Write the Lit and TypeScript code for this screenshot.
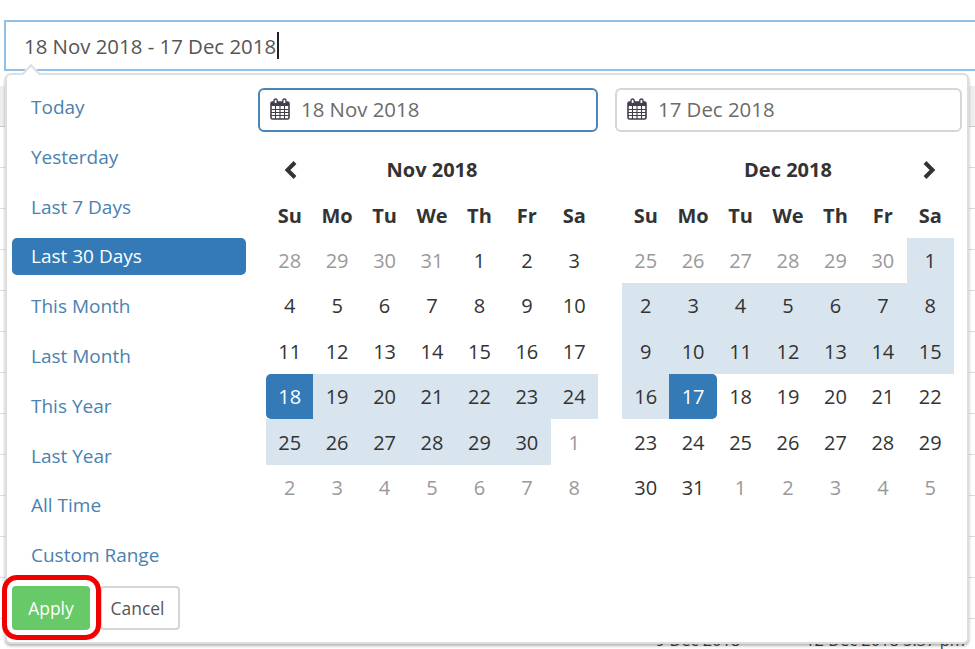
import { LitElement, html, css, nothing } from 'lit';
import { customElement } from 'lit/decorators.js';

const RANGES = ['Today', 'Yesterday', 'Last 7 Days', 'Last 30 Days', 'This Month', 'Last Month', 'This Year', 'Last Year', 'All Time', 'Custom Range'];
const DOW = ['Su', 'Mo', 'Tu', 'We', 'Th', 'Fr', 'Sa'];

type Cell = { d: number; off?: boolean; inRange?: boolean; active?: 'start' | 'end' };

const NOV: Cell[] = [
  ...[28, 29, 30, 31].map((d) => ({ d, off: true })),
  ...Array.from({ length: 30 }, (_, i) => {
    const d = i + 1;
    return { d, inRange: d >= 18, active: d === 18 ? ('start' as const) : undefined };
  }),
  ...[1, 2, 3, 4, 5, 6, 7, 8].map((d) => ({ d, off: true })),
];

const DEC: Cell[] = [
  ...[25, 26, 27, 28, 29, 30].map((d) => ({ d, off: true })),
  ...Array.from({ length: 31 }, (_, i) => {
    const d = i + 1;
    return { d, inRange: d <= 17, active: d === 17 ? ('end' as const) : undefined };
  }),
  ...[1, 2, 3, 4, 5].map((d) => ({ d, off: true })),
];

const calendarIcon = html`<svg class="cal-icon" viewBox="0 0 20 22" width="20" height="22">
  <rect x="1" y="4" width="18" height="17" rx="1.5" fill="#fff" stroke="#443d4c" stroke-width="1.6"/>
  <rect x="1" y="4" width="18" height="4" fill="#443d4c"/>
  <path d="M1 11.5H19M1 14.5H19M1 17.5H19M5.5 8V21M10 8V21M14.5 8V21" stroke="#443d4c" stroke-width="1.1" fill="none"/>
  <path d="M4 5V2.6A1.6 1.6 0 0 1 7.2 2.6V5M12.8 5V2.6A1.6 1.6 0 0 1 16 2.6V5" fill="#fff" stroke="#443d4c" stroke-width="1.4"/>
</svg>`;

@customElement('app-root')
export class AppRoot extends LitElement {
  static override styles = css`
    :host {
      display: block;
      position: relative;
      width: 975px;
      height: 649px;
      overflow: hidden;
      background: #fff;
      font-family: 'Open Sans', sans-serif;
      font-size: 20px;
      color: #333;
    }

    .search {
      box-sizing: border-box;
      height: 51px;
      margin: 20px -20px 0 4px;
      padding: 0 18px;
      display: flex;
      align-items: center;
      border: 2px solid #8fc0ea;
      color: #555;
      font-size: 20.4px;
    }

    .caret {
      width: 1.5px;
      height: 27px;
      background: #222;
      margin-left: 1px;
    }

    .behind {
      margin-top: 15px;
    }

    .behind-row {
      box-sizing: border-box;
      height: 41px;
      border-bottom: 1px solid #ddd;
    }

    .behind-row.head {
      background: #eee;
      border-bottom: 1px solid #ccc;
    }

    .behind-text {
      display: flex;
      justify-content: flex-end;
      gap: 65px;
      margin-top: 9px;
      padding-right: 10px;
      font-size: 16.4px;
      color: #444;
      white-space: nowrap;
    }

    .popup {
      position: absolute;
      left: 5px;
      top: 73px;
      box-sizing: border-box;
      width: 964px;
      height: 571px;
      display: flex;
      background: #fff;
      border: 2px solid #dedede;
      border-radius: 6px;
      box-shadow: 0 2px 3px rgba(0, 0, 0, 0.3);
    }

    .popup::before {
      content: '';
      position: absolute;
      left: 17px;
      top: -8px;
      width: 12px;
      height: 12px;
      background: #fff;
      border-left: 2px solid #dedede;
      border-top: 2px solid #dedede;
      transform: rotate(45deg);
    }

    .side {
      position: relative;
      box-sizing: border-box;
      width: 240px;
      flex: none;
      padding: 13.6px 0 0 5px;
    }

    .range-item {
      box-sizing: border-box;
      width: 234px;
      height: 37px;
      margin-bottom: 12.8px;
      padding-left: 19px;
      display: flex;
      align-items: center;
      border-radius: 5px;
      color: #4a82b0;
      font-size: 19px;
    }

    .range-item.on {
      background: #337ab7;
      color: #fff;
    }

    .buttons {
      display: flex;
      gap: 10px;
      margin-top: -1px;
    }

    .btn {
      box-sizing: border-box;
      height: 44px;
      display: flex;
      align-items: center;
      justify-content: center;
      border-radius: 4px;
      font-size: 17.4px;
    }

    .apply {
      width: 78px;
      background: #68c968;
      color: #fff;
    }

    .cancel {
      width: 80px;
      padding-right: 5px;
      background: #fff;
      border: 2px solid #d6d6d6;
      color: #555;
    }

    .callout {
      position: absolute;
      left: -5px;
      top: 500px;
      box-sizing: border-box;
      width: 99px;
      height: 65px;
      border: 5px solid #f00000;
      border-radius: 15px;
    }

    .main {
      flex: 1;
      padding-top: 13px;
    }

    .inputs {
      display: flex;
      gap: 17px;
      padding-left: 11px;
    }

    .date-input {
      box-sizing: border-box;
      height: 44px;
      display: flex;
      align-items: center;
      gap: 11px;
      padding: 0 0 2px 10px;
      border: 2px solid #d6d6d6;
      border-radius: 6px;
      color: #6b6b6b;
      font-size: 20.4px;
    }

    .date-input.first {
      width: 340px;
      border-color: #4a86b8;
    }

    .date-input.second {
      width: 347px;
    }

    .cal-icon {
      flex: none;
    }

    .calendars {
      display: flex;
      gap: 24px;
      padding: 15px 0 0 19px;
    }

    .cal {
      width: 332px;
      display: grid;
      grid-template-columns: repeat(7, 1fr);
      grid-auto-rows: 45.4px;
      align-items: center;
      text-align: center;
    }

    .title {
      grid-column: 2 / 7;
      font-weight: 700;
      font-size: 20px;
    }

    .nav {
      display: flex;
      justify-content: center;
    }

    .dow {
      font-weight: 700;
      font-size: 20px;
    }

    .day {
      height: 100%;
      display: flex;
      align-items: center;
      justify-content: center;
    }

    .day.off {
      color: #999;
    }

    .day.in-range {
      background: #d8e5ef;
    }

    .day.active {
      background: #337ab7;
      color: #fff;
    }

    .day.start {
      border-radius: 5px 0 0 5px;
    }

    .day.end {
      border-radius: 0 5px 5px 0;
    }
  `;

  private renderCalendar(title: string, cells: Cell[], prev: boolean, next: boolean) {
    return html`
      <div class="cal">
        <div class="nav">
          ${prev
            ? html`<svg viewBox="0 0 16 20" width="16" height="20"><path d="M13 2.5 5.5 10l7.5 7.5" fill="none" stroke="#333" stroke-width="4"/></svg>`
            : nothing}
        </div>
        <div class="title">${title}</div>
        <div class="nav">
          ${next
            ? html`<svg viewBox="0 0 16 20" width="16" height="20"><path d="M3 2.5 10.5 10 3 17.5" fill="none" stroke="#333" stroke-width="4"/></svg>`
            : nothing}
        </div>
        ${DOW.map((d) => html`<div class="dow">${d}</div>`)}
        ${cells.map((c) => {
          const cls = ['day', c.off ? 'off' : '', c.inRange ? 'in-range' : '', c.active ? `active ${c.active}` : ''].join(' ');
          return html`<div class=${cls}>${c.d}</div>`;
        })}
      </div>
    `;
  }

  override render() {
    return html`
      <div class="search">18 Nov 2018 - 17 Dec 2018<span class="caret"></span></div>

      <div class="behind">
        <div class="behind-row head"></div>
        ${[...Array(12)].map(() => html`<div class="behind-row"></div>`)}
        <div class="behind-text"><span>9 Dec 2018</span><span>12 Dec 2018 5:37 pm</span></div>
      </div>

      <div class="popup">
        <div class="side">
          ${RANGES.map((r) => html`<div class="range-item ${r === 'Last 30 Days' ? 'on' : ''}">${r}</div>`)}
          <div class="buttons">
            <div class="btn apply">Apply</div>
            <div class="btn cancel">Cancel</div>
          </div>
          <div class="callout"></div>
        </div>
        <div class="main">
          <div class="inputs">
            <div class="date-input first">${calendarIcon}18 Nov 2018</div>
            <div class="date-input second">${calendarIcon}17 Dec 2018</div>
          </div>
          <div class="calendars">
            ${this.renderCalendar('Nov 2018', NOV, true, false)}
            ${this.renderCalendar('Dec 2018', DEC, false, true)}
          </div>
        </div>
      </div>
    `;
  }
}

declare global {
  interface HTMLElementTagNameMap {
    'app-root': AppRoot;
  }
}
